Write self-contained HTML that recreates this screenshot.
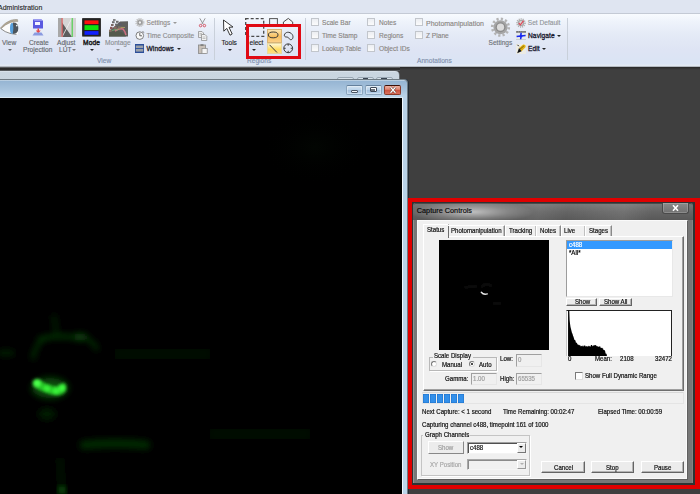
<!DOCTYPE html>
<html><head><meta charset="utf-8">
<style>
*{margin:0;padding:0;box-sizing:border-box}
html,body{width:700px;height:494px;overflow:hidden;background:#3f3f3f;position:relative;font-family:"Liberation Sans",sans-serif}
.a{position:absolute}
.t{position:absolute;white-space:nowrap;line-height:1;font-family:"Liberation Sans",sans-serif}
.rb{font-size:6.6px;color:#5f6368;margin-top:0.9px;-webkit-text-stroke:0.12px currentColor}
.cb{position:absolute;width:8px;height:8px;border:1px solid #c2c6cc;background:linear-gradient(#eceef2,#fbfbfb)}
.arr{position:absolute;width:0;height:0;border-left:2px solid transparent;border-right:2px solid transparent;border-top:2px solid #333}
.sep{position:absolute;width:1px;background:#c9d0da}
.d{font-size:6.6px;color:#111;transform:scaleX(0.925);transform-origin:0 0;margin-top:0.4px;-webkit-text-stroke:0.2px currentColor}
.btn{position:absolute;background:#ececec;border:1px solid #fff;border-right-color:#646464;border-bottom-color:#646464;box-shadow:inset -1px -1px 0 #b4b4b4}
.inp{position:absolute;background:#f0f0f0;border:1px solid #a0a0a0;border-right-color:#e6e6e6;border-bottom-color:#e6e6e6}
</style></head>
<body>
<!-- ============ RIBBON ============ -->
<div class="a" style="left:0;top:0;width:700px;height:13px;background:#dfe5f1"></div>
<div class="t" style="left:-2px;top:4.2px;font-size:7px;color:#1e1e1e;-webkit-text-stroke:0.1px #1e1e1e">Administration</div>
<div class="a" style="left:0;top:13px;width:700px;height:1px;background:#c4cad5"></div>
<div class="a" style="left:0;top:14px;width:700px;height:52px;background:linear-gradient(#f8fbff 0%,#eef3fb 15%,#e4eaf6 40%,#dee4f4 70%,#dae4f4 95%,#e4eaf2 100%)"></div>
<div class="a" style="left:0;top:66px;width:700px;height:1px;background:#b3b9c1"></div>
<div class="a" style="left:0;top:67px;width:400px;height:4px;background:linear-gradient(#8a8e92 0%,#2a2a2a 25%,#2e2e2e 80%,#9aa4ac 100%)"></div>
<div class="a" style="left:400px;top:67px;width:300px;height:3px;background:linear-gradient(#282828,#404040)"></div>

<!-- separators -->
<div class="sep" style="left:214px;top:18px;height:42px"></div>
<div class="sep" style="left:305px;top:18px;height:42px"></div>
<div class="sep" style="left:567px;top:18px;height:42px"></div>

<!-- Eye icon -->
<svg class="a" style="left:0;top:16px" width="20" height="22" viewBox="0 0 20 22">
 <path d="M0.5 12.3 Q6 6 11 5 L17.5 4 L18 18.5 L12 18.5 Q5 17 0.5 12.3Z" fill="#fcfcfc"/>
 <path d="M0.3 12.2 Q5 6 11 4.2 Q15 3 17.5 3.6 L17.8 5.6 Q14 5.2 10.5 6.4 Q5 8.5 1.2 12.6Z" fill="#b4a994" stroke="#8a8478" stroke-width="0.5"/>
 <path d="M0.8 12.6 Q5 16.2 10 17.4 Q14 18.3 16.5 18.3" stroke="#7c7c7c" stroke-width="0.9" fill="none"/>
 <ellipse cx="12" cy="12.4" rx="2" ry="5.4" fill="#58a0dc"/>
 <path d="M12.8 6.6 Q18.5 6.4 18.3 12.3 Q18.3 18 12.8 18 Q14 12 12.8 6.6Z" fill="#4c545c"/>
 <circle cx="16.8" cy="9.6" r="0.9" fill="#e8f0f0"/>
</svg>
<div class="t rb" style="left:2px;top:39.3px;color:#62666a">View</div>
<div class="arr" style="left:7.5px;top:49px;border-top-color:#666"></div>

<!-- Projection icon -->
<svg class="a" style="left:32px;top:18px" width="13" height="19" viewBox="0 0 13 19">
 <path d="M1 1.5 L9.5 1.5 L11 3 L11 10.5 L1 10.5Z" fill="#5a5ae0"/>
 <path d="M1 1.5 L9.5 1.5 L11 3 L2.5 3Z" fill="#9090f0"/>
 <rect x="3" y="4" width="5" height="3" fill="#f4f4ff"/>
 <rect x="5.5" y="10.5" width="1.5" height="3" fill="#e04848"/>
 <path d="M3.8 12.5 L8.7 12.5 L6.25 15.5Z" fill="#e84848"/>
 <path d="M2.5 14.5 L9.5 14.5 L11.5 17.5 L0.5 17.5Z" fill="#8a9ae0"/>
</svg>
<div class="t rb" style="left:29px;top:39.3px;color:#62666a">Create</div>
<div class="t rb" style="left:23px;top:46.6px;color:#62666a">Projection</div>

<!-- Adjust LUT icon -->
<svg class="a" style="left:58px;top:18px" width="18" height="19" viewBox="0 0 18 19">
 <rect x="0" y="0" width="18" height="19" fill="#d4d4d4"/>
 <rect x="0" y="0" width="4" height="19" fill="#a8a8a8"/>
 <path d="M4 4.5 L14 19 L4 19Z" fill="#5c5c5c"/>
 <path d="M4 19 L14 0" stroke="#f0f0f0" stroke-width="0.8"/>
 <rect x="3.5" y="0" width="1.2" height="19" fill="#e06060"/>
 <rect x="13.6" y="0" width="1.2" height="19" fill="#50d050"/>
</svg>
<div class="t rb" style="left:57px;top:39.3px;color:#62666a">Adjust</div>
<div class="t rb" style="left:59px;top:46.6px;color:#62666a">LUT</div>
<div class="arr" style="left:71.5px;top:49px;border-top-color:#777"></div>

<!-- Mode icon -->
<svg class="a" style="left:82px;top:18px" width="19" height="19" viewBox="0 0 19 19">
 <rect x="0" y="0" width="19" height="18.5" rx="1" fill="#222" stroke="#666" stroke-width="0.6"/>
 <rect x="2.5" y="2.4" width="14" height="3.7" fill="#ff1010"/>
 <rect x="2.5" y="7.2" width="14" height="4.8" fill="#10e010"/>
 <rect x="2.5" y="13.1" width="14" height="3.7" fill="#1020ff"/>
</svg>
<div class="t rb" style="left:83px;top:39.3px;color:#1a1a1a;-webkit-text-stroke:0.4px #1a1a1a;letter-spacing:0.15px">Mode</div>
<div class="arr" style="left:89.5px;top:49px;border-top-color:#222"></div>

<!-- Montage icon -->
<svg class="a" style="left:109px;top:19px" width="20" height="18" viewBox="0 0 20 18">
 <path d="M11 2.6 L19 2.3 L19 17.4 L0 17.6 L0 12 Q4 9 11 2.6Z" fill="#5e5e5c"/>
 <path d="M0 17.6 L0 13 Q5 11.5 10 12.2 Q15 13 17 17.6Z" fill="#545a4c"/>
 <path d="M6 12 Q10 9 14 10 Q16 12 17 16" stroke="#d07080" stroke-width="1.6" fill="none"/>
 <path d="M8 11 Q12 7 16 8.5" stroke="#b0a060" stroke-width="0.9" fill="none"/>
 <path d="M3 11.5 Q6 10 9 11" stroke="#70b070" stroke-width="0.9" fill="none"/>
 <g fill="#6c6c6c">
  <rect x="4" y="0.2" width="2.6" height="1.6"/>
  <rect x="3" y="2.2" width="2.6" height="2"/>
  <rect x="7" y="1.8" width="2.6" height="2"/>
  <rect x="2" y="5" width="2.6" height="2" fill="#7a6a66"/>
  <rect x="6" y="4.6" width="2.6" height="2"/>
  <rect x="10" y="4.4" width="2.6" height="2" fill="#5a5a6a"/>
  <rect x="1" y="7.8" width="2.6" height="2.2" fill="#8a5a5a"/>
  <rect x="5" y="7.6" width="2.6" height="2.2" fill="#8a6a60"/>
  <rect x="9" y="7.3" width="2.6" height="2.2" fill="#7a7060"/>
  <rect x="0" y="10.6" width="2.6" height="2.2" fill="#8a7060"/>
 </g>
</svg>
<div class="t rb" style="left:105px;top:39.3px;color:#8a8e92">Montage</div>
<div class="arr" style="left:116px;top:49px;border-top-color:#888"></div>

<div class="t rb" style="left:97px;top:57px;color:#7e8eaa">View</div>

<!-- small buttons -->
<svg class="a" style="left:135px;top:18px" width="10" height="9" viewBox="0 0 10 9">
 <circle cx="4.9" cy="4.5" r="3.9" fill="none" stroke="#c0c0c0" stroke-width="1.3" stroke-dasharray="1.2 0.85"/>
 <circle cx="4.9" cy="4.5" r="3.2" fill="#b0b0b0"/>
 <circle cx="4.9" cy="4.5" r="1.9" fill="#8a8a8a"/>
 <circle cx="4.9" cy="4.5" r="1.2" fill="#f0f0f0"/>
</svg>
<div class="t rb" style="left:146.5px;top:19.5px;color:#8e8a86">Settings</div>
<div class="arr" style="left:173px;top:22px;border-top-color:#999"></div>

<svg class="a" style="left:135px;top:31px" width="10" height="9" viewBox="0 0 10 9">
 <circle cx="4.8" cy="4.6" r="3.8" fill="#fafafa" stroke="#707070" stroke-width="0.9"/>
 <path d="M4.8 1.8 L4.8 4.8 L7 4.8" stroke="#555" stroke-width="0.9" fill="none"/>
 <path d="M7.5 0.5 L9.2 1.5" stroke="#707070" stroke-width="0.9"/>
</svg>
<div class="t rb" style="left:146.5px;top:32px;color:#8c8c8c">Time Composite</div>

<svg class="a" style="left:135px;top:44px" width="9" height="9" viewBox="0 0 9 9">
 <rect x="0" y="0" width="9" height="9" fill="#2a4e9a"/>
 <rect x="0.8" y="1.5" width="7.4" height="2.6" fill="#9aa0a8"/>
 <rect x="0.8" y="5" width="7.4" height="2.6" fill="#9aa0a8"/>
</svg>
<div class="t rb" style="left:146.5px;top:44.8px;color:#1a1a28;-webkit-text-stroke:0.3px #1a1a28;letter-spacing:0.1px">Windows</div>
<div class="arr" style="left:177px;top:47.5px;border-top-color:#222"></div>

<!-- clipboard icons -->
<svg class="a" style="left:198px;top:18px" width="9" height="10" viewBox="0 0 9 10">
 <path d="M1.8 0.3 L5.2 6.2 M7.2 0.3 L3.8 6.2" stroke="#8c8c8c" stroke-width="0.9"/>
 <circle cx="2.6" cy="7.6" r="1.25" fill="none" stroke="#d04858" stroke-width="0.9"/>
 <circle cx="6.4" cy="7.6" r="1.25" fill="none" stroke="#d04858" stroke-width="0.9"/>
</svg>
<svg class="a" style="left:198px;top:31px" width="10" height="10" viewBox="0 0 10 10">
 <path d="M0.5 0.5 L4 0.5 L5.5 2 L5.5 6.5 L0.5 6.5Z" fill="#f0f0f0" stroke="#909090" stroke-width="0.8"/>
 <path d="M3.5 3.5 L7 3.5 L8.8 5.3 L8.8 9.5 L3.5 9.5Z" fill="#f4f4f4" stroke="#909090" stroke-width="0.8"/>
 <path d="M1.5 2.5 H4 M1.5 4 H4 M4.5 6 H7.5 M4.5 7.5 H7.5" stroke="#a0a0a0" stroke-width="0.6"/>
</svg>
<svg class="a" style="left:198px;top:44px" width="10" height="10" viewBox="0 0 10 10">
 <rect x="0.5" y="1" width="7" height="8.5" fill="#c8c0b8" stroke="#888" stroke-width="0.8"/>
 <rect x="2.5" y="0.3" width="3" height="1.5" fill="#777"/>
 <rect x="4" y="4.5" width="5.2" height="5" fill="#f4f4f4" stroke="#888" stroke-width="0.7"/>
</svg>

<!-- Tools -->
<svg class="a" style="left:222px;top:19px" width="14" height="18" viewBox="0 0 14 18">
 <path d="M1.5 1 L11 8 L7 8.3 L10.2 15 L8 16.2 L4.8 9.4 L1.8 12.2Z" fill="#fff" stroke="#222" stroke-width="0.9" stroke-linejoin="round"/>
</svg>
<div class="t rb" style="left:221.5px;top:39.2px;color:#222">Tools</div>
<div class="arr" style="left:227.5px;top:49px;border-top-color:#222"></div>

<!-- Regions -->
<svg class="a" style="left:245px;top:18px" width="20" height="19" viewBox="0 0 20 19">
 <rect x="0.7" y="0.7" width="18" height="17.6" fill="none" stroke="#4a4a4a" stroke-width="1.3" stroke-dasharray="3 2"/>
</svg>
<div class="t rb" style="left:249.5px;top:39.2px;color:#222">elect</div>
<div class="arr" style="left:252px;top:49px;border-top-color:#222"></div>
<svg class="a" style="left:269px;top:18px" width="9" height="9" viewBox="0 0 9 9">
 <rect x="0.6" y="0.6" width="7.8" height="8" fill="none" stroke="#555" stroke-width="1"/>
</svg>
<svg class="a" style="left:282px;top:17px" width="12" height="10" viewBox="0 0 12 10">
 <path d="M1.4 10 L1.4 5 L6.3 1.4 L10.7 5 L10.7 10" fill="#f4f6f8" stroke="#4a4a4a" stroke-width="1"/>
</svg>
<div class="a" style="left:267px;top:29px;width:14.5px;height:13.5px;border:1px solid #d8b478;background:linear-gradient(#fde4b0,#f8c060 55%,#fcd088)"></div>
<svg class="a" style="left:267px;top:29px" width="15" height="14" viewBox="0 0 15 14">
 <ellipse cx="6.2" cy="5.9" rx="4.8" ry="2.9" fill="none" stroke="#333" stroke-width="0.95"/>
</svg>
<div class="a" style="left:267px;top:42.5px;width:14.5px;height:11.5px;border:1px solid #e8d8a0;background:linear-gradient(#fff6d0,#ffdc60 60%,#ffe080)"></div>
<svg class="a" style="left:267px;top:42.5px" width="15" height="12" viewBox="0 0 15 12">
 <path d="M2.5 1.8 L10 9.5" stroke="#333" stroke-width="0.95"/>
</svg>
<svg class="a" style="left:283px;top:30px" width="11" height="11" viewBox="0 0 11 11">
 <path d="M1.3 5.3 C1.8 1.8, 6.8 1, 9.3 4.6 C10.8 7, 9.6 10, 7.6 9.7 C6 9.4, 6.2 7.5, 4.3 7.1 C2.6 6.8, 1.8 7.3, 1.3 5.3Z" fill="none" stroke="#333" stroke-width="0.95"/>
</svg>
<svg class="a" style="left:283px;top:43px" width="11" height="11" viewBox="0 0 11 11">
 <circle cx="5.2" cy="5.3" r="4.4" fill="none" stroke="#333" stroke-width="0.95"/>
 <path d="M5.2 0.9 V2.8 M5.2 7.8 V9.7 M0.8 5.3 H2.7 M7.7 5.3 H9.6" stroke="#333" stroke-width="0.9"/>
</svg>
<div class="t rb" style="left:247px;top:57px;color:#7e8eaa">Regions</div>
<div class="a" style="left:245.5px;top:23.8px;width:55.3px;height:34.8px;border:3.7px solid #e00a14"></div>

<!-- Annotations checkboxes -->
<div class="cb" style="left:311px;top:18px"></div>
<div class="cb" style="left:311px;top:30.9px"></div>
<div class="cb" style="left:311px;top:43.8px"></div>
<div class="t rb" style="left:322px;top:19.3px;color:#88847f">Scale Bar</div>
<div class="t rb" style="left:322px;top:32.3px;color:#88847f">Time Stamp</div>
<div class="t rb" style="left:322px;top:45.1px;color:#88847f">Lookup Table</div>
<div class="cb" style="left:367px;top:18px"></div>
<div class="cb" style="left:367px;top:30.9px"></div>
<div class="cb" style="left:367px;top:43.8px"></div>
<div class="t rb" style="left:379px;top:19.3px;color:#88847f">Notes</div>
<div class="t rb" style="left:379px;top:32.3px;color:#88847f">Regions</div>
<div class="t rb" style="left:379px;top:45.1px;color:#88847f">Object IDs</div>
<div class="cb" style="left:415px;top:18px"></div>
<div class="cb" style="left:415px;top:30.9px"></div>
<div class="t rb" style="left:426px;top:19.1px;color:#88847f;font-size:7px">Photomanipulation</div>
<div class="t rb" style="left:426px;top:32.3px;color:#88847f">Z Plane</div>
<div class="t rb" style="left:417px;top:57px;color:#7e8eaa">Annotations</div>

<!-- Settings big gear -->
<svg class="a" style="left:490px;top:17px" width="21" height="21" viewBox="0 0 21 21">
 <circle cx="10.5" cy="10.2" r="8.3" fill="none" stroke="#b4b4b4" stroke-width="2.6" stroke-dasharray="2.2 2.15"/>
 <circle cx="10.5" cy="10.2" r="7" fill="#a6a6a6"/>
 <circle cx="10.5" cy="10.2" r="5" fill="#8c8c8c"/>
 <circle cx="10.5" cy="10.2" r="3.6" fill="#dcdcdc"/>
</svg>
<div class="t rb" style="left:488.5px;top:38.9px;color:#6c7074">Settings</div>

<svg class="a" style="left:516px;top:18px" width="10" height="10" viewBox="0 0 10 10">
 <circle cx="5" cy="5" r="4" fill="none" stroke="#b0b0b0" stroke-width="1.6" stroke-dasharray="1.1 0.9"/>
 <circle cx="5" cy="5" r="3.2" fill="#a8a8a8"/>
 <circle cx="5" cy="5" r="2" fill="#d8d8d8"/>
 <path d="M2.8 5 L4.4 6.8 L7.6 2.6" stroke="#e04858" stroke-width="1.2" fill="none"/>
</svg>
<div class="t rb" style="left:527.8px;top:19.5px;color:#909498">Set Default</div>
<svg class="a" style="left:516px;top:31px" width="10" height="9" viewBox="0 0 10 9">
 <rect x="0" y="0" width="10" height="9" fill="#e4e8ec"/>
 <rect x="0" y="0.2" width="10" height="1.4" fill="#505050"/>
 <path d="M0.3 0.9 H9.7" stroke="#e8e8e8" stroke-width="0.5" stroke-dasharray="0.9 0.9"/>
 <path d="M5.2 1.8 Q4.6 4 5 5 Q4.8 7 4.6 8.6 M0.6 5.4 Q3 4.8 5 4.9 Q7.5 4.6 9.6 4.6" stroke="#1828f0" stroke-width="1.5" fill="none"/>
 <circle cx="5" cy="5" r="1.5" fill="#1828f0"/>
 <rect x="0" y="8.4" width="10" height="0.6" fill="#b8bcc0"/>
</svg>
<div class="t rb" style="left:528px;top:32px;color:#1a1a30;-webkit-text-stroke:0.3px #1a1a30;letter-spacing:0.1px">Navigate</div>
<div class="arr" style="left:557px;top:34.7px;border-top-color:#222"></div>
<svg class="a" style="left:516px;top:44px" width="10" height="10" viewBox="0 0 10 10">
 <rect x="0" y="0" width="10" height="10" fill="#ecebe4"/>
 <path d="M3 4 L7.2 0.6 Q9.8 0.6 9.6 3 L5.6 7.2Z" fill="#e0b010"/>
 <path d="M3 4 L5.6 7.2 L1.2 9.2Z" fill="#141414"/>
 <path d="M4 5.2 L7.8 2" stroke="#3a3000" stroke-width="0.6"/>
 <path d="M1.5 0.8 L2.8 2.2" stroke="#202020" stroke-width="1"/>
</svg>
<div class="t rb" style="left:528px;top:44.8px;color:#1a1a30;-webkit-text-stroke:0.3px #1a1a30;letter-spacing:0.1px">Edit</div>
<div class="arr" style="left:541.5px;top:47.5px;border-top-color:#222"></div>


<!-- ============ BACK WINDOW ============ -->
<div class="a" style="left:-10px;top:71px;width:409px;height:30px;background:linear-gradient(#dfe7ee 0px,#cad6e0 1.5px,#c6d3de 100%);border-radius:0 4px 0 0;box-shadow:0.5px 0 0 #8a949c"></div>
<div class="a" style="left:337px;top:76.5px;width:17px;height:6px;border:1px solid #9aa8b4;border-radius:2px;background:#d8e2ea"></div>
<div class="a" style="left:356.5px;top:76.5px;width:17px;height:6px;border:1px solid #9aa8b4;border-radius:2px;background:#d8e2ea"></div>
<div class="a" style="left:375.5px;top:76.5px;width:17px;height:6px;border:1px solid #9aa8b4;border-radius:2px;background:#d8e2ea"></div>
<div class="a" style="left:362.5px;top:77.8px;width:5.5px;height:2px;background:#3a4450"></div>
<div class="a" style="left:381px;top:77.8px;width:6px;height:2px;background:#3a4450"></div>

<!-- ============ FRONT WINDOW ============ -->
<div class="a" style="left:-10px;top:79.3px;width:417.5px;height:420px;background:#6e7a82;border-radius:0 4px 0 0;box-shadow:0.6px 0 0 #142434"></div>
<div class="a" style="left:-10px;top:80.2px;width:416.6px;height:420px;background:linear-gradient(#dde8f0 0px,#96b5d3 1px,#a6c2dc 9px,#b8d2e8 16px,#bcd5ea 100%);border-radius:0 3.5px 0 0"></div>
<div class="a" style="left:345.7px;top:85.4px;width:17.2px;height:9.6px;border:1px solid #8aa4bc;border-top-color:#64809c;border-radius:2px;background:linear-gradient(#d4e4f2 0%,#bcd4ea 45%,#a4c0dc 55%,#b8d2ea 100%);box-shadow:inset 0 0 0 0.6px rgba(255,255,255,0.6)"></div>
<div class="a" style="left:350.8px;top:89.8px;width:7px;height:3px;border:0.8px solid #4a5462;border-radius:1px;background:#f4f8fc"></div>
<div class="a" style="left:364.7px;top:85.4px;width:17.3px;height:9.6px;border:1px solid #8aa4bc;border-top-color:#64809c;border-radius:2px;background:linear-gradient(#d4e4f2 0%,#bcd4ea 45%,#a4c0dc 55%,#b8d2ea 100%);box-shadow:inset 0 0 0 0.6px rgba(255,255,255,0.6)"></div>
<div class="a" style="left:370px;top:87.4px;width:6.8px;height:4.6px;border:0.8px solid #3c4654;border-radius:1px;background:#fff"></div>
<div class="a" style="left:371.4px;top:88.8px;width:4px;height:1.8px;background:#6a7480"></div>
<div class="a" style="left:384.2px;top:85.4px;width:17.3px;height:9.6px;border:1px solid #8a3a2a;border-top-color:#3c1008;border-radius:2px;background:linear-gradient(#eeb0a0 0%,#e08a78 40%,#cc5440 55%,#d8705c 100%)"></div>
<svg class="a" style="left:389px;top:86px" width="8" height="8" viewBox="0 0 8 8">
 <path d="M1.5 1.3 L6.5 6.7 M6.5 1.3 L1.5 6.7" stroke="#5a2a22" stroke-width="2.4"/>
 <path d="M1.5 1.3 L6.5 6.7 M6.5 1.3 L1.5 6.7" stroke="#fff" stroke-width="1.3"/>
</svg>
<div class="a" style="left:0;top:98px;width:402px;height:400px;background:#000"></div>
<div class="a" style="left:402px;top:97.5px;width:1px;height:400px;background:#f0f8ff"></div>
<div class="a" style="left:0;top:97.3px;width:403px;height:0.7px;background:#d8e8f4"></div>
<svg class="a" style="left:0;top:98px" width="402" height="396" viewBox="0 98 402 396">
 <defs>
  <filter id="g1" x="-50%" y="-50%" width="200%" height="200%"><feGaussianBlur stdDeviation="1.5"/></filter>
  <filter id="g2" x="-50%" y="-50%" width="200%" height="200%"><feGaussianBlur stdDeviation="3"/></filter>
  <filter id="g3" x="-50%" y="-100%" width="200%" height="300%"><feGaussianBlur stdDeviation="4"/></filter>
  <radialGradient id="rg1"><stop offset="0" stop-color="#061006"/><stop offset="1" stop-color="#000" stop-opacity="0"/></radialGradient>
 </defs>
 <ellipse cx="315" cy="147" rx="55" ry="38" fill="url(#rg1)" opacity="0.35"/>
 <g filter="url(#g2)" fill="none" stroke-linecap="round">
  <path d="M33 358 Q35 346 42 340" stroke="#073807" stroke-width="3.5"/>
  <path d="M40 339 Q55 335 70 337" stroke="#083c08" stroke-width="4"/>
  <ellipse cx="80" cy="337" rx="8" ry="3.5" fill="#0b4a0b" stroke="none"/>
  <path d="M85 338 Q93 341 97 349" stroke="#073407" stroke-width="3.5"/>
  <path d="M54 316 L57 338" stroke="#062e06" stroke-width="3"/>
  <path d="M0 353 L12 353" stroke="#052605" stroke-width="5"/>
  <path d="M84 445 Q115 442 146 445" stroke="#062a06" stroke-width="9"/>
  <ellipse cx="47" cy="414" rx="9" ry="6" fill="#041c04" stroke="none"/>
  <path d="M60 460 L62 494" stroke="#031603" stroke-width="5"/>
 </g>
 <g filter="url(#g1)" stroke="none">
  <ellipse cx="50" cy="388" rx="18" ry="10" fill="#0a500a" filter="url(#g2)"/>
  <path d="M33 381 Q36 378 40 380 Q44 384 48 385 Q53 387 57 387 Q61 384 64 383 Q67 385 66 390 Q64 395 57 395 Q51 395 46 392 Q40 390 35 387 Q32 385 33 381Z" fill="#26c826"/>
  <circle cx="37" cy="383" r="3.8" fill="#48ff48"/>
  <circle cx="47" cy="388.5" r="3.2" fill="#38f038"/>
  <circle cx="56" cy="391" r="3.4" fill="#38f038"/>
  <circle cx="62" cy="388" r="3.2" fill="#40f840"/>
 </g>
 <circle cx="62" cy="490" r="3" fill="#188a18" filter="url(#g2)"/>
 <g filter="url(#g3)"><path d="M115 354 L210 354" stroke="#020c02" stroke-width="10"/><path d="M210 434 L310 434" stroke="#020c02" stroke-width="10"/></g>
</svg>

<!-- ============ DIALOG ============ -->
<div class="a" style="left:408px;top:198px;width:292px;height:290.5px;border-style:solid;border-color:#e00000;border-width:4px 5px 4.5px 4.5px"></div>
<div class="a" style="left:412px;top:202px;width:283px;height:282.5px;background:#2c3434"></div>
<div class="a" style="left:412.7px;top:202.5px;width:280.8px;height:280.5px;border-radius:3px 3px 0 0;background:#777;box-shadow:inset 0.8px 0 0 #999,inset -1px 0 0 #858585"></div>
<div class="a" style="left:412.7px;top:202.5px;width:280.8px;height:17px;border-radius:3px 3px 0 0;background:linear-gradient(100deg,rgba(255,255,255,0) 30%,rgba(255,255,255,0.07) 45%,rgba(255,255,255,0) 55%,rgba(255,255,255,0.09) 75%,rgba(255,255,255,0) 85%),linear-gradient(#767676 0px,#646464 8px,#585858 16px,#5c5c5c 100%);border-top:1px solid #4a4a4a"></div>
<div class="a" style="left:412.7px;top:202.5px;width:280.8px;height:17px;border-radius:3px 3px 0 0;background:radial-gradient(ellipse 62px 11px at 59px 9px,rgba(215,215,215,0.8),rgba(200,200,200,0.3) 60%,rgba(200,200,200,0) 100%)"></div>
<div class="t" style="left:416.8px;top:206.6px;font-size:7.3px;color:#080808;-webkit-text-stroke:0.15px #080808">Capture Controls</div>
<div class="a" style="left:662px;top:202.5px;width:26.5px;height:11px;border:1px solid #4a4a4a;border-top:none;border-radius:0 0 3px 3px;background:linear-gradient(#8a8a8a,#707070);box-shadow:inset 0 0 0 0.7px rgba(255,255,255,0.25)"></div>
<svg class="a" style="left:671px;top:204px" width="9" height="8" viewBox="0 0 9 8">
 <path d="M2 1.2 L7 6.8 M7 1.2 L2 6.8" stroke="#fff" stroke-width="1.6"/>
</svg>
<div class="a" style="left:416.8px;top:219.5px;width:271.4px;height:260.3px;background:#f0f0f0;border:1px solid #fafafa;border-right-color:#606060;border-bottom-color:#606060;box-shadow:inset -1px -1px 0 #fafafa"></div>

<!-- tabs -->
<div class="a" style="left:422.5px;top:236px;width:261.8px;height:155px;border:1px solid #fff;border-right-color:#6e6e6e;border-bottom-color:#6e6e6e;box-shadow:inset -1px -1px 0 #a0a0a0"></div>
<div class="a" style="left:422.5px;top:223.5px;width:26px;height:14px;background:#f0f0f0;border-left:1px solid #fff;border-top:1px solid #fff;border-right:1px solid #6e6e6e"></div>
<div class="t d" style="left:426.8px;top:226.5px;font-size:6.6px">Status</div>
<div class="a" style="left:448px;top:225px;width:57px;height:11px;border-top:1px solid #fff;border-right:1px solid #8a8a8a;box-shadow:inset -1px 0 0 #c0c0c0"></div>
<div class="t d" style="left:450.7px;top:227.3px;font-size:6.6px">Photomanipulation</div>
<div class="a" style="left:504.5px;top:225px;width:32px;height:11px;border-top:1px solid #fff;border-left:1px solid #fff;border-right:1px solid #8a8a8a;box-shadow:inset -1px 0 0 #c0c0c0"></div>
<div class="t d" style="left:509px;top:227.3px;font-size:6.6px">Tracking</div>
<div class="a" style="left:536px;top:225px;width:25px;height:11px;border-top:1px solid #fff;border-left:1px solid #fff;border-right:1px solid #8a8a8a;box-shadow:inset -1px 0 0 #c0c0c0"></div>
<div class="t d" style="left:540px;top:227.3px;font-size:6.6px">Notes</div>
<div class="a" style="left:560.5px;top:225px;width:25px;height:11px;border-top:1px solid #fff;border-left:1px solid #fff;border-right:1px solid #8a8a8a;box-shadow:inset -1px 0 0 #c0c0c0"></div>
<div class="t d" style="left:564px;top:227.3px;font-size:6.6px">Live</div>
<div class="a" style="left:585px;top:225px;width:27px;height:11px;border-top:1px solid #fff;border-left:1px solid #fff;border-right:1px solid #8a8a8a;box-shadow:inset -1px 0 0 #c0c0c0"></div>
<div class="t d" style="left:589px;top:227.3px;font-size:6.6px">Stages</div>

<!-- preview -->
<div class="a" style="left:438.5px;top:239.7px;width:110px;height:110px;background:#000"></div>
<svg class="a" style="left:438.5px;top:239.7px" width="110" height="110" viewBox="438.5 239.7 110 110">
 <defs><filter id="bl1" x="-50%" y="-50%" width="200%" height="200%"><feGaussianBlur stdDeviation="0.5"/></filter>
 <filter id="bl2" x="-50%" y="-50%" width="200%" height="200%"><feGaussianBlur stdDeviation="1"/></filter></defs>
 <g filter="url(#bl2)" fill="none">
  <path d="M481 287 Q483 284 486 284 Q489 284 491 286" stroke="#1c1c1c" stroke-width="1.5"/>
  <path d="M464 287 L477 286" stroke="#161616" stroke-width="1.5"/>
  <path d="M492 303 L501 303" stroke="#161616" stroke-width="1.5"/>
 </g>
 <path d="M480.8 292 Q483 294.8 486.8 293.6" stroke="#e8e8e8" stroke-width="1.4" fill="none" filter="url(#bl1)" stroke-linecap="round"/>
</svg>

<!-- list box -->
<div class="a" style="left:566px;top:239.7px;width:106.5px;height:57.3px;background:#fff;border:1px solid #9c9c9c;border-right-color:#e8e8e8;border-bottom-color:#e8e8e8"></div>
<div class="a" style="left:567px;top:240.6px;width:104.5px;height:8px;background:#3399ff"></div>
<div class="t d" style="left:568.5px;top:241.2px;font-size:6.6px;color:#fff">c488</div>
<div class="t d" style="left:568.5px;top:249.3px;font-size:6.6px;color:#000">*All*</div>
<div class="btn" style="left:566px;top:297.6px;width:31px;height:8.5px"></div>
<div class="t d" style="left:574.5px;top:298.7px;font-size:6.6px">Show</div>
<div class="btn" style="left:599px;top:297.6px;width:32.5px;height:8.5px"></div>
<div class="t d" style="left:603.5px;top:298.7px;font-size:6.6px">Show All</div>

<!-- histogram -->
<div class="a" style="left:566px;top:310px;width:106px;height:45.5px;background:#fff;border-top:1.2px solid #222;border-right:1.5px solid #222;border-left:1px solid #c8c8c8"></div>
<svg class="a" style="left:566px;top:310px" width="106" height="46" viewBox="0 0 106 46">
 <path d="M2.5 46 L2.5 0.5 L2.5 0.5 L3.0 0.5 L3.5 10.0 L4.0 13.5 L4.5 17.0 L5.0 19.0 L5.5 21.0 L6.0 23.0 L6.5 23.8 L7.0 25.8 L7.5 26.7 L8.0 28.5 L8.5 29.9 L9.0 30.1 L9.5 30.7 L10.0 32.9 L10.5 32.4 L11.0 33.0 L11.5 34.8 L12.0 34.1 L12.5 35.2 L13.0 34.8 L13.5 35.4 L14.0 34.8 L14.5 35.9 L15.0 36.4 L15.5 35.8 L16.0 36.3 L16.5 36.3 L17.0 35.1 L17.5 36.5 L18.0 36.2 L18.5 35.6 L19.0 35.0 L19.5 36.7 L20.0 35.9 L20.5 36.3 L21.0 36.6 L21.5 36.3 L22.0 36.7 L22.5 35.6 L23.0 36.4 L23.5 35.7 L24.0 36.7 L24.5 36.5 L25.0 34.9 L25.5 34.9 L26.0 35.0 L26.5 36.5 L27.0 35.4 L27.5 35.7 L28.0 35.0 L28.5 35.4 L29.0 35.1 L29.5 35.1 L30.0 35.6 L30.5 35.7 L31.0 36.5 L31.5 36.1 L32.0 36.7 L32.5 36.6 L33.0 37.0 L33.5 36.6 L34.0 35.8 L34.5 37.5 L35.0 37.9 L35.5 38.1 L36.0 37.6 L36.5 38.6 L37.0 38.2 L37.5 40.0 L38.0 40.1 L38.5 40.3 L39.0 40.6 L39.5 43.0 L40.0 44.0 L40.5 43.4 L41.0 46.1 L41.5 46Z" fill="#000"/>
 <rect x="2" y="0" width="1.3" height="46" fill="#111"/>
</svg>
<div class="t d" style="left:567.5px;top:356px;font-size:6.6px">0</div>
<div class="t d" style="left:594.8px;top:356px;font-size:6.6px">Mean:</div>
<div class="t d" style="left:620px;top:356px;font-size:6.6px">2108</div>
<div class="t d" style="left:655px;top:356px;font-size:6.6px">32472</div>

<div class="a" style="left:575px;top:372px;width:7.5px;height:7.5px;background:#fff;border:1px solid #7a7a7a;border-right-color:#e0e0e0;border-bottom-color:#e0e0e0"></div>
<div class="t d" style="left:585.3px;top:372.5px;font-size:6.6px">Show Full Dynamic Range</div>

<!-- scale display -->
<div class="a" style="left:429px;top:356.5px;width:67.5px;height:14px;border:1px solid #b8b8b8;box-shadow:1px 1px 0 #fff"></div>
<div class="a" style="left:432.5px;top:352px;width:40px;height:8px;background:#f0f0f0"></div>
<div class="t d" style="left:434px;top:353px;font-size:6.6px">Scale Display</div>
<div class="a" style="left:431px;top:361px;width:6px;height:6px;border-radius:50%;border:1px solid #777;border-right-color:#ddd;border-bottom-color:#ddd;background:#fff"></div>
<div class="t d" style="left:442px;top:361.2px;font-size:6.6px">Manual</div>
<div class="a" style="left:469px;top:361px;width:6px;height:6px;border-radius:50%;border:1px solid #777;border-right-color:#ddd;border-bottom-color:#ddd;background:#fff"></div>
<div class="a" style="left:471px;top:363px;width:2px;height:2px;border-radius:50%;background:#111"></div>
<div class="t d" style="left:479px;top:361.2px;font-size:6.6px">Auto</div>

<div class="t d" style="left:500px;top:356px;font-size:6.6px">Low:</div>
<div class="inp" style="left:516px;top:354px;width:25.5px;height:12.5px"></div>
<div class="t d" style="left:518px;top:356.5px;font-size:6.6px;color:#a0a0a0">0</div>
<div class="t d" style="left:445px;top:376px;font-size:6.6px">Gamma:</div>
<div class="inp" style="left:471px;top:373px;width:26px;height:12px"></div>
<div class="t d" style="left:473px;top:375.5px;font-size:6.6px;color:#a0a0a0">1.00</div>
<div class="t d" style="left:500px;top:376px;font-size:6.6px">High:</div>
<div class="inp" style="left:516px;top:372.5px;width:25.5px;height:12.5px"></div>
<div class="t d" style="left:518px;top:375.5px;font-size:6.6px;color:#a0a0a0">65535</div>

<!-- progress -->
<div class="a" style="left:422px;top:391.5px;width:262px;height:12px;border:1px solid #e4e4e4;border-top-color:#d8d8d8;background:#f0f0f0"></div>
<div class="a" style="left:422.9px;top:394px;width:6px;height:8.6px;background:#3390ea;box-shadow:inset 0 0 0 0.5px #2070c8"></div>
<div class="a" style="left:429.9px;top:394px;width:6px;height:8.6px;background:#3390ea;box-shadow:inset 0 0 0 0.5px #2070c8"></div>
<div class="a" style="left:436.9px;top:394px;width:6px;height:8.6px;background:#3390ea;box-shadow:inset 0 0 0 0.5px #2070c8"></div>
<div class="a" style="left:443.9px;top:394px;width:6px;height:8.6px;background:#3390ea;box-shadow:inset 0 0 0 0.5px #2070c8"></div>
<div class="a" style="left:450.9px;top:394px;width:6px;height:8.6px;background:#3390ea;box-shadow:inset 0 0 0 0.5px #2070c8"></div>
<div class="a" style="left:457.9px;top:394px;width:6px;height:8.6px;background:#3390ea;box-shadow:inset 0 0 0 0.5px #2070c8"></div>

<div class="t d" style="left:422px;top:408.5px;font-size:6.6px">Next Capture: &lt; 1 second</div>
<div class="t d" style="left:503px;top:408.5px;font-size:6.6px">Time Remaining: 00:02:47</div>
<div class="t d" style="left:598px;top:408.5px;font-size:6.6px">Elapsed Time: 00:00:59</div>
<div class="t d" style="left:422px;top:422px;font-size:6.6px">Capturing channel c488, timepoint 161 of 1000</div>

<!-- graph channels -->
<div class="a" style="left:420.5px;top:435px;width:109px;height:40.5px;border:1px solid #c4c4c4;box-shadow:1px 1px 0 #fff"></div>
<div class="a" style="left:423px;top:431px;width:47px;height:8px;background:#f0f0f0"></div>
<div class="t d" style="left:424.5px;top:432px;font-size:6.6px">Graph Channels</div>
<div class="btn" style="left:428px;top:441.3px;width:35.7px;height:12.7px;box-shadow:none;border-right-color:#888;border-bottom-color:#888"></div>
<div class="t d" style="left:437.5px;top:445px;font-size:6.6px;color:#a0a0a0">Show</div>
<div class="a" style="left:467px;top:442px;width:60px;height:11.6px;background:#fff;border:1px solid #a0a0a0;border-right-color:#f4f4f4;border-bottom-color:#f4f4f4;box-shadow:inset 1px 1px 0 #505050"></div>
<div class="t d" style="left:469.5px;top:444.8px;font-size:6.6px">c488</div>
<div class="btn" style="left:517px;top:443px;width:9px;height:9.6px;box-shadow:none;border-right-color:#777;border-bottom-color:#777"></div>
<div class="a" style="left:519px;top:446.3px;width:0;height:0;border-left:2.6px solid transparent;border-right:2.6px solid transparent;border-top:2.8px solid #000"></div>
<div class="t d" style="left:430px;top:462px;font-size:6.6px;color:#a8a8a8">XY Position</div>
<div class="a" style="left:467px;top:458.6px;width:60px;height:11.4px;background:#f0f0f0;border:1px solid #a8a8a8;border-right-color:#f4f4f4;border-bottom-color:#f4f4f4;box-shadow:inset 1px 1px 0 #8a8a8a"></div>
<div class="btn" style="left:517px;top:459.6px;width:9px;height:9.4px;box-shadow:none;border-right-color:#999;border-bottom-color:#999"></div>
<div class="a" style="left:519.5px;top:463px;width:0;height:0;border-left:2px solid transparent;border-right:2px solid transparent;border-top:2.5px solid #b0b0b0"></div>

<div class="btn" style="left:540.6px;top:460.8px;width:44.4px;height:12.5px"></div>
<div class="t d" style="left:553.5px;top:464.5px;font-size:6.6px">Cancel</div>
<div class="btn" style="left:591px;top:460.8px;width:42.7px;height:12.5px"></div>
<div class="t d" style="left:606px;top:464.5px;font-size:6.6px">Stop</div>
<div class="btn" style="left:641px;top:460.8px;width:42.7px;height:12.5px"></div>
<div class="t d" style="left:653.5px;top:464.5px;font-size:6.6px">Pause</div>
</body></html>
